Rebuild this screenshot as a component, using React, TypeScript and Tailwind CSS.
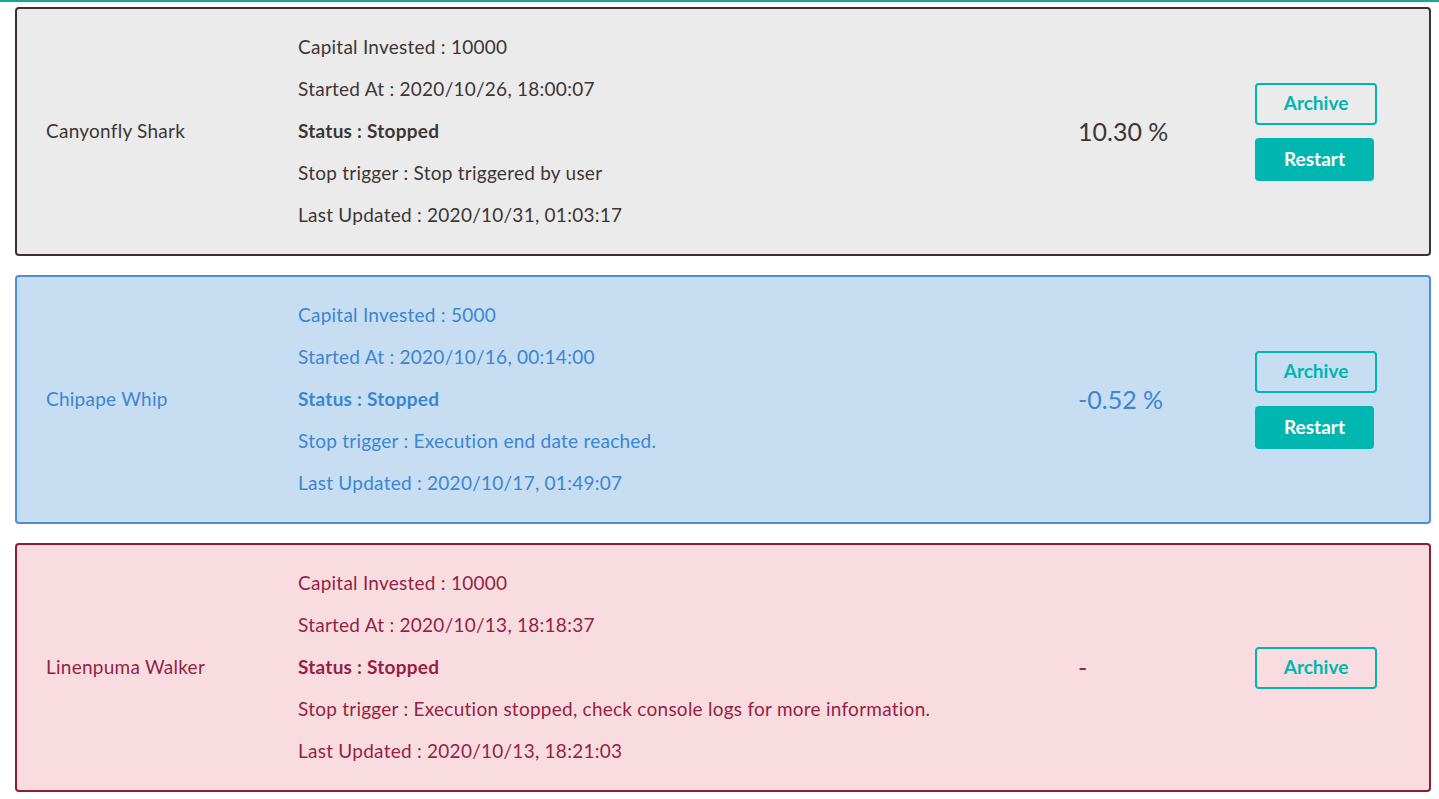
import React from "react";

type Row = {
  name: string;
  capital: string;
  started: string;
  trigger: string;
  updated: string;
  pct: string;
  restart: boolean;
  card: string;
  text: string;
};

const rows: Row[] = [
  {
    name: "Canyonfly Shark",
    capital: "10000",
    started: "2020/10/26, 18:00:07",
    trigger: "Stop triggered by user",
    updated: "2020/10/31, 01:03:17",
    pct: "10.30 %",
    restart: true,
    card: "bg-[#ebebeb] border-[#3a3232]",
    text: "text-[#3d3636]",
  },
  {
    name: "Chipape Whip",
    capital: "5000",
    started: "2020/10/16, 00:14:00",
    trigger: "Execution end date reached.",
    updated: "2020/10/17, 01:49:07",
    pct: "-0.52 %",
    restart: true,
    card: "bg-[#c7ddf2] border-[#4a8fd8]",
    text: "text-[#3b86d2]",
  },
  {
    name: "Linenpuma Walker",
    capital: "10000",
    started: "2020/10/13, 18:18:37",
    trigger: "Execution stopped, check console logs for more information.",
    updated: "2020/10/13, 18:21:03",
    pct: "-",
    restart: false,
    card: "bg-[#f9dce0] border-[#8d1c3c]",
    text: "text-[#961f43]",
  },
];

export default function App() {
  return (
    <div
      className="min-h-[799px] bg-white border-t-2 border-[#17a597] px-[15px] pt-[5px] flex flex-col gap-[19px]"
      style={{ fontFamily: "Lato, 'Noto Sans', sans-serif" }}
    >
      {rows.map((r) => (
        <div
          key={r.name}
          className={`w-[1416px] h-[249px] border-2 rounded-[4px] flex items-center ${r.card} ${r.text}`}
        >
          <div className="w-[281px] pl-[29px] text-[19px] tracking-[0.25px]">{r.name}</div>
          <div className="w-[780px] text-[19px] tracking-[0.25px] leading-[42px] pb-[1px]">
            <div>Capital Invested : {r.capital}</div>
            <div>Started At : {r.started}</div>
            <div className="font-bold">Status : Stopped</div>
            <div>Stop trigger : {r.trigger}</div>
            <div>Last Updated : {r.updated}</div>
          </div>
          <div className="w-[177px] text-[25px]">{r.pct}</div>
          <div className="flex flex-col items-start gap-[13px]">
            <button className="w-[122px] h-[42px] border-2 border-[#00b6b1] rounded-[4px] text-[#00b6b1] font-bold text-[19px] bg-transparent">
              Archive
            </button>
            {r.restart && (
              <button className="w-[119px] h-[43px] rounded-[4px] bg-[#00b6b1] text-white font-bold text-[19px]">
                Restart
              </button>
            )}
          </div>
        </div>
      ))}
    </div>
  );
}
